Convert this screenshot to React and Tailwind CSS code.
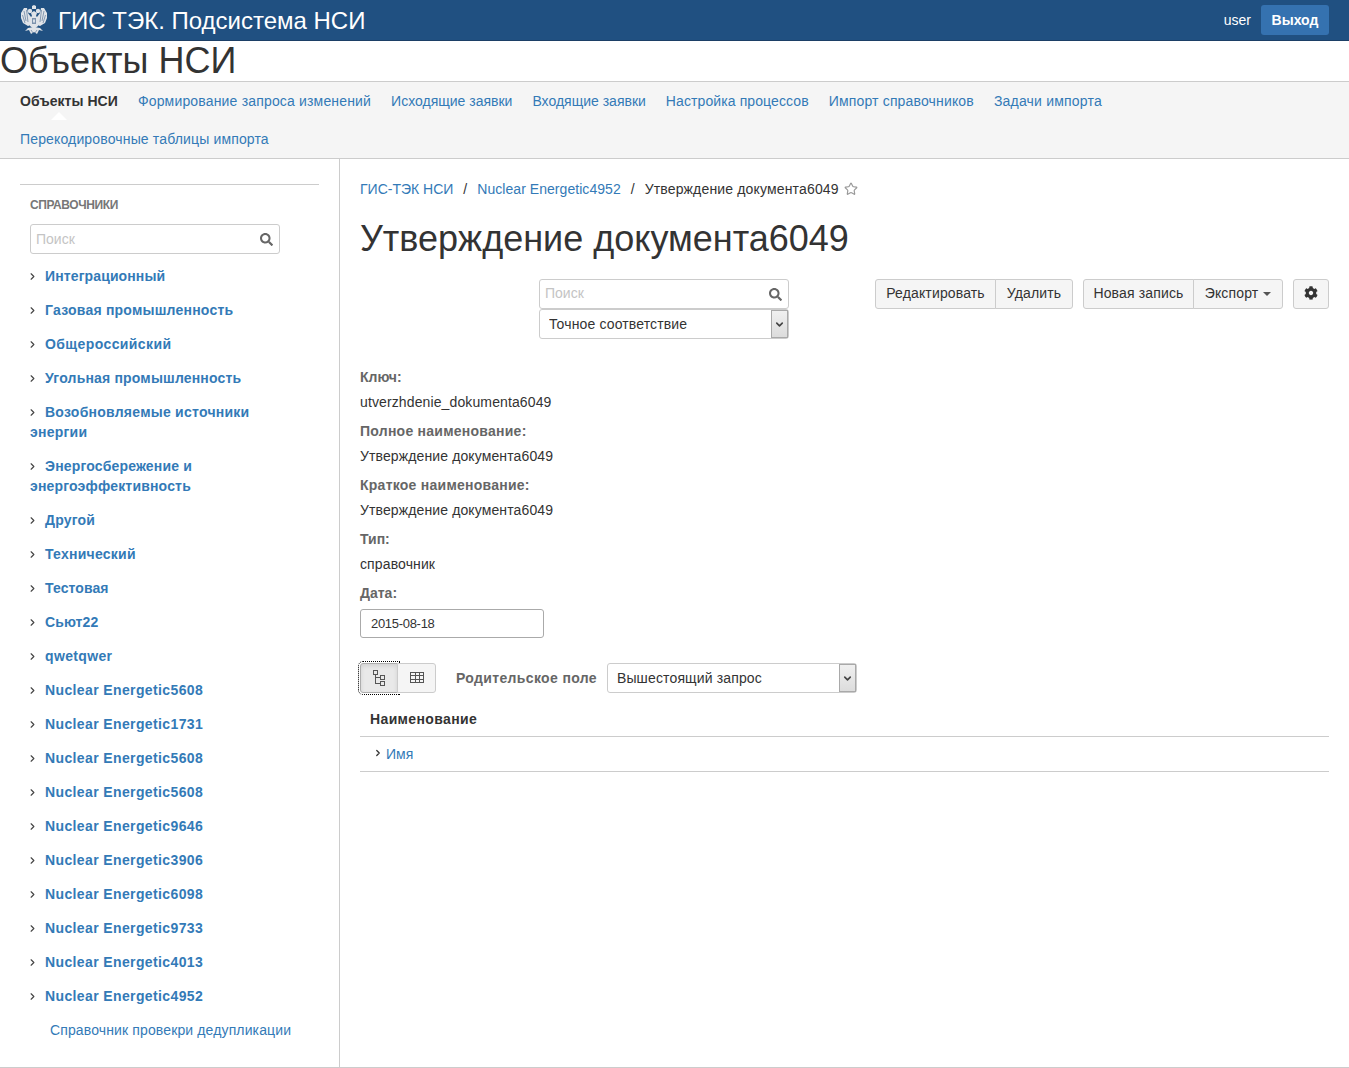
import React from 'react';
import { ChevronRight, ChevronDown, Star } from 'lucide-react';
import { FaCog, FaSearch } from 'react-icons/fa';

const navItems = [
  ['Объекты НСИ', 'font-bold tracking-[0.05px] text-[#333]'],
  ['Формирование запроса изменений', 'tracking-[0.17px] text-[#337ab7]'],
  ['Исходящие заявки', 'text-[#337ab7]'],
  ['Входящие заявки', 'text-[#337ab7]'],
  ['Настройка процессов', 'tracking-[0.1px] text-[#337ab7]'],
  ['Импорт справочников', 'tracking-[0.16px] text-[#337ab7]'],
  ['Задачи импорта', 'tracking-[0.2px] text-[#337ab7]'],
  ['Перекодировочные таблицы импорта', 'tracking-[0.15px] text-[#337ab7]'],
];

const dictionaries = [
  ['Интеграционный', 'tracking-[0.12px]'],
  ['Газовая промышленность', 'tracking-[0.22px]'],
  ['Общероссийский', 'tracking-[0.4px]'],
  ['Угольная промышленность', 'tracking-[0.18px]'],
  ['Возобновляемые источники энергии', 'tracking-[0.25px]'],
  ['Энергосбережение и энергоэффективность', 'tracking-[0.18px]'],
  ['Другой', 'tracking-[0.18px]'],
  ['Технический', 'tracking-[0.25px]'],
  ['Тестовая', 'tracking-[0.1px]'],
  ['Сьют22', 'tracking-[0.1px]'],
  ['qwetqwer', 'tracking-[0.35px]'],
  ['Nuclear Energetic5608', 'tracking-[0.38px]'],
  ['Nuclear Energetic1731', 'tracking-[0.38px]'],
  ['Nuclear Energetic5608', 'tracking-[0.38px]'],
  ['Nuclear Energetic5608', 'tracking-[0.38px]'],
  ['Nuclear Energetic9646', 'tracking-[0.38px]'],
  ['Nuclear Energetic3906', 'tracking-[0.38px]'],
  ['Nuclear Energetic6098', 'tracking-[0.38px]'],
  ['Nuclear Energetic9733', 'tracking-[0.38px]'],
  ['Nuclear Energetic4013', 'tracking-[0.38px]'],
  ['Nuclear Energetic4952', 'tracking-[0.38px]'],
];

const fields = [
  ['Ключ:', 'utverzhdenie_dokumenta6049'],
  ['Полное наименование:', 'Утверждение документа6049'],
  ['Краткое наименование:', 'Утверждение документа6049'],
  ['Тип:', 'справочник'],
];

// двуглавый орёл в шапке, очень условно
function Emblem() {
  return (
    <svg width="28" height="30" viewBox="0 0 28 30" className="shrink-0">
      <g fill="#dfe3e8">
        <path d="M1 8 L4 3 L7 3 L8 8 L11 12 L11 20 L8 21 L3 18 L1 13 Z" />
        <path d="M27 8 L24 3 L21 3 L20 8 L17 12 L17 20 L20 21 L25 18 L27 13 Z" />
        <path d="M11 8 L14 6 L17 8 L16 11 L18 13 L18 21 L14 24 L10 21 L10 13 L12 11 Z" />
        <circle cx="10" cy="6" r="2.2" />
        <circle cx="18" cy="6" r="2.2" />
        <path d="M12 4 L12 1 L14 0 L16 1 L16 4 Z" />
        <path d="M8 23 L14 22 L20 23 L23 26 L19 25 L17 29 L14 27 L11 29 L9 25 L5 26 Z" />
      </g>
      <g stroke="#6f87a3" strokeWidth="0.8" fill="none">
        <path d="M4 6 L6 16 M6.5 5 L8 17 M2.5 10 L5 18" />
        <path d="M24 6 L22 16 M21.5 5 L20 17 M25.5 10 L23 18" />
        <path d="M11 25 L13 28 M17 25 L15 28" />
      </g>
      <rect x="12" y="13" width="4" height="6" fill="#7d93ad" />
      <rect x="13.2" y="14.5" width="1.6" height="3" fill="#eef1f4" />
    </svg>
  );
}

function TreeIcon() {
  return (
    <svg width="14" height="16" viewBox="0 0 14 16" fill="none" stroke="#555" strokeWidth="1" shapeRendering="crispEdges">
      <rect x="1.5" y="0.5" width="4" height="4" />
      <rect x="8.5" y="5.5" width="4" height="4" />
      <rect x="8.5" y="11.5" width="4" height="4" />
      <path d="M3.5 4.5 V13.5 H8.5 M3.5 7.5 H8.5" />
    </svg>
  );
}

function TableIcon() {
  return (
    <svg width="14" height="12" viewBox="0 0 14 12" fill="none" stroke="#555" strokeWidth="1" shapeRendering="crispEdges">
      <rect x="0.5" y="0.5" width="13" height="10" />
      <path d="M0.5 3.5 H13.5 M0.5 7 H13.5 M5 0.5 V10.5 M9.5 0.5 V10.5" />
    </svg>
  );
}

function SearchBox({ className = '', inputClass = '' }) {
  return (
    <div className={`relative h-[30px] w-[250px] ${className}`}>
      <input
        placeholder="Поиск"
        className={`h-full w-full rounded-[3px] border border-[#ccc] bg-white pl-[5px] pr-6 text-sm outline-none placeholder:text-[#c4c4c4] ${inputClass}`}
      />
      <FaSearch size={13} className="absolute right-[7px] top-[9px] text-[#666]" />
    </div>
  );
}

function SelectBox({ value, className = '' }) {
  return (
    <div className={`relative h-[30px] w-[250px] ${className}`}>
      <select className="h-full w-full appearance-none rounded-[3px] border border-[#ccc] bg-white pl-[9px] text-sm tracking-[0.14px] text-[#333] outline-none">
        <option>{value}</option>
      </select>
      <span className="pointer-events-none absolute right-[1px] top-[1px] flex h-[28px] w-[17px] items-center justify-center border border-[#a9a9a9] bg-gradient-to-b from-[#f0f0f0] to-[#dcdcdc]">
        <ChevronDown size={11} strokeWidth={3.5} className="text-[#444]" />
      </span>
    </div>
  );
}

function Btn({ children, className = '' }) {
  return (
    <button className={`h-[30px] border border-[#ccc] bg-[#f5f5f5] pb-[2px] text-sm tracking-[0.15px] text-[#333] ${className}`}>
      {children}
    </button>
  );
}

export default function App() {
  return (
    <div className="min-h-[1068px] bg-white font-['Liberation_Sans',Arial,sans-serif] text-sm text-[#333]">
      {/* Header */}
      <header className="flex h-[41px] items-center border-b border-[#1c3f66] bg-[#205081] pl-5 pr-5">
        <Emblem />
        <span className="ml-[10px] pt-px text-2xl leading-none text-white">ГИС ТЭК. Подсистема НСИ</span>
        <span className="ml-auto text-white">user</span>
        <button className="ml-[10px] h-[30px] w-[68px] rounded-[3px] bg-[#3572b0] font-bold text-white">Выход</button>
      </header>

      <h1 className="h-[41px] border-b border-[#ccc] text-4xl leading-[40px] text-[#333]">Объекты НСИ</h1>

      {/* Nav */}
      <nav className="flex flex-wrap border-b border-[#ccc] bg-[#f5f5f5] px-[10px]">
        {navItems.map(([item, style], i) => (
          <a key={item} href="#" className={`relative block h-[38px] px-[10px] leading-[38px] ${style}`}>
            {item}
            {i === 0 && (
              <span className="absolute bottom-0 left-[41px] h-0 w-0 border-x-[8px] border-b-[8px] border-x-transparent border-b-white" />
            )}
          </a>
        ))}
      </nav>

      <div className="flex min-h-[909px] border-b border-[#ccc]">
        {/* Sidebar */}
        <aside className="w-[340px] shrink-0 border-r border-[#ccc] px-5 pt-[25px]">
          <div className="border-t border-[#ccc] px-[10px] pt-[13px]">
            <div className="text-xs font-bold leading-[14px] tracking-[-0.4px] text-[#777]">СПРАВОЧНИКИ</div>
            <SearchBox className="mt-[12px]" />
            <ul className="mt-[5px] w-[250px]">
              {dictionaries.map(([name, spacing], i) => (
                <li key={i} className="py-[7px] leading-5">
                  <ChevronRight size={11} strokeWidth={2.5} className="ml-[-3px] mr-[7px] inline-block align-[-1px] text-[#444]" />
                  <a href="#" className={`font-bold text-[#337ab7] ${spacing}`}>{name}</a>
                </li>
              ))}
            </ul>
            <a href="#" className="mt-[7px] block pl-5 leading-5 tracking-[0.13px] text-[#337ab7]">Справочник провекри дедупликации</a>
          </div>
        </aside>

        {/* Main */}
        <main className="min-w-0 flex-1 px-5 pt-[20px]">
          <div className="flex h-5 items-center leading-5">
            <a href="#" className="text-[#337ab7]">ГИС-ТЭК НСИ</a>
            <span className="px-[10px]">/</span>
            <a href="#" className="tracking-[0.05px] text-[#337ab7]">Nuclear Energetic4952</a>
            <span className="px-[10px]">/</span>
            <span className="tracking-[0.16px]">Утверждение документа6049</span>
            <Star size={14} className="ml-[5px] text-[#999]" />
          </div>

          <h2 className="mt-[20px] text-4xl leading-[40px] text-[#333]">Утверждение документа6049</h2>

          <div className="mt-[20px] flex items-start">
            <div className="ml-[179px]">
              <SearchBox inputClass="pb-[2px]" />
              <SelectBox value="Точное соответствие" />
            </div>
            <div className="ml-auto flex">
              <Btn className="w-[121px] rounded-l-[3px]">Редактировать</Btn>
              <Btn className="ml-[-1px] w-[78px] rounded-r-[3px]">Удалить</Btn>
              <Btn className="ml-[10px] w-[111px] rounded-l-[3px]">Новая запись</Btn>
              <Btn className="ml-[-1px] w-[90px] rounded-r-[3px]">
                Экспорт
                <span className="ml-[5px] inline-block border-x-[4px] border-t-[4px] border-x-transparent border-t-[#555] align-middle" />
              </Btn>
              <Btn className="ml-[10px] flex w-[36px] items-center justify-center rounded-[3px] pb-1">
                <FaCog size={14} />
              </Btn>
            </div>
          </div>

          {/* Fields */}
          <dl className="mt-[28px]">
            {fields.map(([label, value]) => (
              <div key={label} className="mb-[9px]">
                <dt className={`font-bold leading-5 text-[#666] ${label.length > 10 ? 'tracking-[0.25px]' : ''}`}>{label}</dt>
                <dd className="mt-[5px] leading-5 tracking-[0.12px]">{value}</dd>
              </div>
            ))}
            <dt className="font-bold leading-5 text-[#666]">Дата:</dt>
            <dd className="mt-[6px]">
              <input
                defaultValue="2015-08-18"
                className="h-[29px] w-[184px] rounded-[3px] border border-[#aaa] pl-[10px] text-[13px] tracking-[-0.3px] text-[#333] outline-none"
              />
            </dd>
          </dl>

          {/* Tree toolbar */}
          <div className="mt-[25px] flex items-center">
            <button className="flex h-[30px] w-[38px] items-center justify-center rounded-l-[3px] border border-[#adadad] bg-[#e9e9e9] shadow-[inset_0_2px_4px_rgba(0,0,0,0.1)] outline-1 outline-offset-1 outline-black outline-dotted">
              <TreeIcon />
            </button>
            <button className="ml-[-1px] flex h-[30px] w-[39px] items-center justify-center rounded-r-[3px] border border-[#ccc] bg-[#f5f5f5] pl-px">
              <TableIcon />
            </button>
            <span className="ml-5 font-bold tracking-[0.35px] text-[#666]">Родительское поле</span>
            <SelectBox value="Вышестоящий запрос" className="ml-[10px]" />
          </div>

          {/* Table */}
          <div className="mt-[16px] border-b border-[#ccc] px-[10px] pb-[7px] font-bold leading-5 tracking-[0.37px]">Наименование</div>
          <div className="flex h-[35px] items-center border-b border-[#ccc] pl-[13px]">
            <ChevronRight size={10} strokeWidth={3} className="mb-[3px] text-[#333]" />
            <a href="#" className="ml-[3px] text-[#337ab7]">Имя</a>
          </div>
        </main>
      </div>
    </div>
  );
}
